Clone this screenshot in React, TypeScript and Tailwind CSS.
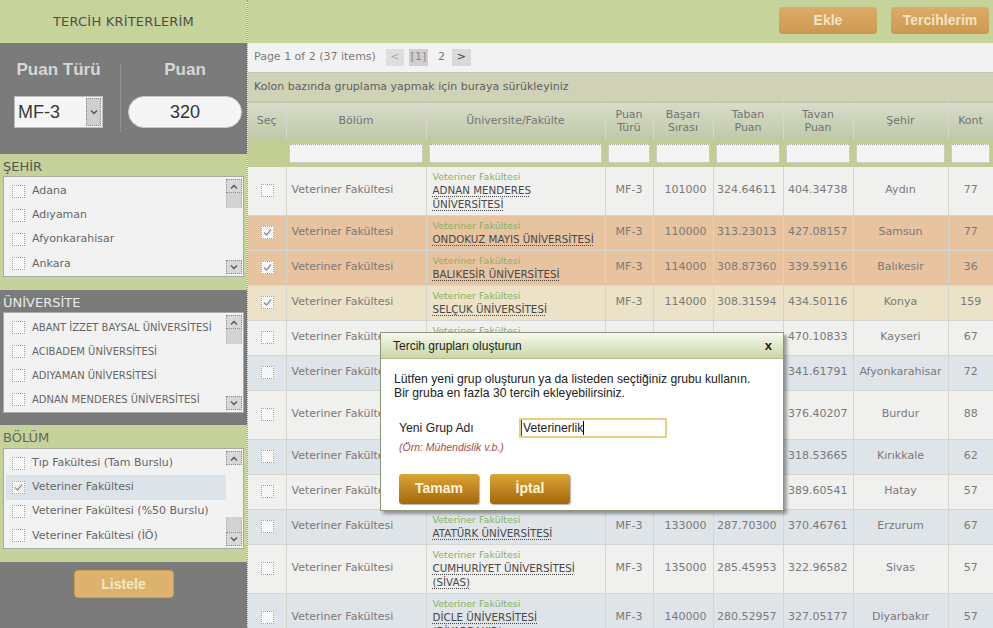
import React from 'react';

type Row = {
  sel?: boolean;
  uni: string[];
  sira: string;
  taban: string;
  tavan: string;
  sehir: string;
  kont: string;
  tone: 'white' | 'blue' | 'orange' | 'beige';
};

const tones = {
  white: 'bg-[#f0f0ef]',
  blue: 'bg-[#dfe4e9]',
  orange: 'bg-[#e7c3a0]',
  beige: 'bg-[#ebe2c7]',
};

const rows: Row[] = [
  { uni: ['ADNAN MENDERES', 'ÜNİVERSİTESİ'], sira: '101000', taban: '324.64611', tavan: '404.34738', sehir: 'Aydın', kont: '77', tone: 'white' },
  { sel: true, uni: ['ONDOKUZ MAYIS ÜNİVERSİTESİ'], sira: '110000', taban: '313.23013', tavan: '427.08157', sehir: 'Samsun', kont: '77', tone: 'orange' },
  { sel: true, uni: ['BALIKESİR ÜNİVERSİTESİ'], sira: '114000', taban: '308.87360', tavan: '339.59116', sehir: 'Balıkesir', kont: '36', tone: 'orange' },
  { sel: true, uni: ['SELÇUK ÜNİVERSİTESİ'], sira: '114000', taban: '308.31594', tavan: '434.50116', sehir: 'Konya', kont: '159', tone: 'beige' },
  { uni: ['ERCİYES ÜNİVERSİTESİ'], sira: '116000', taban: '305.88190', tavan: '470.10833', sehir: 'Kayseri', kont: '67', tone: 'white' },
  { uni: ['AFYON KOCATEPE ÜNİVERSİTESİ'], sira: '120000', taban: '300.14552', tavan: '341.61791', sehir: 'Afyonkarahisar', kont: '72', tone: 'blue' },
  { uni: ['MEHMET AKİF ERSOY', 'ÜNİVERSİTESİ'], sira: '124000', taban: '296.40318', tavan: '376.40207', sehir: 'Burdur', kont: '88', tone: 'white' },
  { uni: ['KIRIKKALE ÜNİVERSİTESİ'], sira: '128000', taban: '292.60114', tavan: '318.53665', sehir: 'Kırıkkale', kont: '62', tone: 'blue' },
  { uni: ['MUSTAFA KEMAL ÜNİVERSİTESİ'], sira: '131000', taban: '289.90412', tavan: '389.60541', sehir: 'Hatay', kont: '57', tone: 'white' },
  { uni: ['ATATÜRK ÜNİVERSİTESİ'], sira: '133000', taban: '287.70300', tavan: '370.46761', sehir: 'Erzurum', kont: '67', tone: 'blue' },
  { uni: ['CUMHURİYET ÜNİVERSİTESİ', '(SİVAS)'], sira: '135000', taban: '285.45953', tavan: '322.96582', sehir: 'Sivas', kont: '57', tone: 'white' },
  { uni: ['DİCLE ÜNİVERSİTESİ', '(DİYARBAKIR)'], sira: '140000', taban: '280.52957', tavan: '327.05177', sehir: 'Diyarbakır', kont: '57', tone: 'blue' },
];

const cities = ['Adana', 'Adıyaman', 'Afyonkarahisar', 'Ankara'];
const unis = ['ABANT İZZET BAYSAL ÜNİVERSİTESİ', 'ACIBADEM ÜNİVERSİTESİ', 'ADIYAMAN ÜNİVERSİTESİ', 'ADNAN MENDERES ÜNİVERSİTESİ'];
const bolumler = ['Tıp Fakültesi (Tam Burslu)', 'Veteriner Fakültesi', 'Veteriner Fakültesi (%50 Burslu)', 'Veteriner Fakültesi (İÖ)'];

function Chevron({ up }: { up?: boolean }) {
  return (
    <svg width="8" height="5" viewBox="0 0 8 5">
      <path d={up ? 'M1 4.5L4 1.5L7 4.5' : 'M1 0.5L4 3.5L7 0.5'} fill="none" stroke="#555" strokeWidth="1.3" />
    </svg>
  );
}

function Box({ checked }: { checked?: boolean }) {
  return (
    <span className="w-[13px] h-[13px] shrink-0 border border-dotted border-[#a4a4a4] bg-[#f7f7f7] flex items-center justify-center">
      {checked && (
        <svg width="11" height="11" viewBox="0 0 11 11">
          <path d="M2 5.5L4.5 8L9 2.5" fill="none" stroke="#8e8e8e" strokeWidth="1.2" />
        </svg>
      )}
    </span>
  );
}

function ListBox({ items, selected, upper, thumbBottom }: { items: string[]; selected?: number; upper?: boolean; thumbBottom?: boolean }) {
  return (
    <div className="mx-[3px] h-[101px] bg-[#f2f2f2] border border-[#a9a9a9] flex">
      <div className="flex-1 flex flex-col pt-[2px] pl-[2px]">
        {items.map((it, i) => (
          <div key={it} className={`h-[24.5px] flex items-center pl-[6px] gap-[7px] ${selected === i ? 'bg-[#dde4e9]' : ''}`}>
            <Box checked={selected === i} />
            <span className={`${upper ? 'text-[10px]' : 'text-[11px]'} text-[#666] whitespace-nowrap`}>{it}</span>
          </div>
        ))}
      </div>
      <div className="w-[16px] mr-[1px] py-[2px] flex flex-col">
        <div className="h-[14px] bg-[#d8d8d8] border border-dotted border-[#8f8f8f] flex items-center justify-center">
          <Chevron up />
        </div>
        <div className={`flex-1 flex flex-col ${thumbBottom ? 'justify-end' : 'justify-start'}`}>
          <div className="h-[15px] bg-[#d2d2d2] border-x border-[#c4c4c4]" />
        </div>
        <div className="h-[14px] bg-[#d8d8d8] border border-dotted border-[#8f8f8f] flex items-center justify-center">
          <Chevron />
        </div>
      </div>
    </div>
  );
}

function Sidebar() {
  return (
    <aside className="w-[247px] shrink-0 flex flex-col">
      <div className="h-[43px] bg-[#c6d39b] flex items-center justify-center text-[13px] text-[#4e4e4e] tracking-[0.2px]">
        TERCİH KRİTERLERİM
      </div>
      <div className="h-[111px] bg-[#7b7b7b] flex font-['Liberation_Sans',sans-serif]">
        <div className="w-[120px] pl-[14px] pt-[17px]">
          <div className="w-[89px] flex flex-col items-center">
            <div className="text-[17px] font-bold text-[#d6d6d6] leading-[20px] whitespace-nowrap">Puan Türü</div>
            <div className="mt-[16px] w-[89px] h-[32px] bg-[#f5f5f5] border border-[#bdbdbd] flex items-center">
              <span className="flex-1 pl-[3px] text-[18px] text-[#3a3a3a]">MF-3</span>
              <span className="w-[15px] h-[28px] mr-[1px] bg-[#cfcfcf] border border-dotted border-[#8a8a8a] flex items-center justify-center">
                <Chevron />
              </span>
            </div>
          </div>
        </div>
        <div className="my-[22px] border-l border-dotted border-[#a8a8a8]" />
        <div className="flex-1 pl-[7px] pr-[5px] pt-[17px] flex flex-col items-center">
          <div className="text-[17px] font-bold text-[#d6d6d6] leading-[20px]">Puan</div>
          <div className="mt-[16px] w-full h-[32px] bg-[#f5f5f5] rounded-full border border-[#c8c8c8] flex items-center justify-center text-[18px] text-[#333]">
            320
          </div>
        </div>
      </div>
      <div className="h-[136px] bg-[#c5d299] pt-[4px]">
        <div className="px-[3px] h-[18px] text-[13px] leading-[18px] text-[#555]">ŞEHİR</div>
        <ListBox items={cities} />
      </div>
      <div className="h-[135px] bg-[#7b7b7b] pt-[4px]">
        <div className="px-[3px] h-[18px] text-[13px] leading-[18px] text-[#ececec]">ÜNİVERSİTE</div>
        <ListBox items={unis} upper />
      </div>
      <div className="h-[137px] bg-[#c5d299] pt-[4px]">
        <div className="px-[3px] h-[19px] text-[13px] leading-[18px] text-[#666]">BÖLÜM</div>
        <ListBox items={bolumler} selected={1} thumbBottom />
      </div>
      <div className="flex-1 bg-[#7b7b7b] pt-[8px] flex justify-center">
        <div className="w-[100px] h-[28px] rounded-[4px] bg-[#ddb26c] border border-[#c99a52] flex items-center justify-center font-['Liberation_Sans',sans-serif] text-[14px] font-bold text-[#f4e6c8]">
          Listele
        </div>
      </div>
    </aside>
  );
}

const heads = [
  { t: ['Seç'], w: 'w-[38px]' },
  { t: ['Bölüm'], w: 'w-[140px]' },
  { t: ['Üniversite/Fakülte'], w: 'w-[179px]' },
  { t: ['Puan', 'Türü'], w: 'w-[48px]' },
  { t: ['Başarı', 'Sırası'], w: 'w-[60px]' },
  { t: ['Taban', 'Puan'], w: 'w-[70px]' },
  { t: ['Tavan', 'Puan'], w: 'w-[70px]' },
  { t: ['Şehir'], w: 'w-[95px]' },
  { t: ['Kont'], w: 'w-[45px]' },
];

function Grid() {
  const cell = 'border-r border-[#d5d6cd]';
  return (
    <table className="w-[745px] table-fixed border-collapse text-[11px] text-[#7a7a7a]">
      <colgroup>
        {heads.map((h) => (
          <col key={h.t.join()} className={h.w} />
        ))}
      </colgroup>
      <thead>
        <tr className="h-[38px] bg-gradient-to-b from-[#d8dcc9] to-[#c0c9a9] border-y border-[#c2c7b2]">
          {heads.map((h) => (
            <th key={h.t.join()} className={`${cell} font-normal text-center leading-[13px] text-[#747474]`}>
              {h.t.map((l) => (
                <div key={l}>{l}</div>
              ))}
            </th>
          ))}
        </tr>
        <tr className="h-[27px] bg-[#c1cd93]">
          <th />
          {heads.slice(1).map((h) => (
            <th key={h.t.join()} className="px-[3px]">
              <div className="h-[19px] bg-[#f4f4f4] rounded-[2px] border border-dotted border-[#a2a89a]" />
            </th>
          ))}
        </tr>
      </thead>
      <tbody>
        {rows.map((r, i) => (
          <tr key={i} className={`${tones[r.tone]} border-b border-[#d6d6d6]`}>
            <td className={cell}>
              <div className="flex justify-center pl-[2px]">
                <Box checked={r.sel} />
              </div>
            </td>
            <td className={`${cell} pl-[5px] whitespace-nowrap`}>Veteriner Fakültesi</td>
            <td className={`${cell} pl-[6px] pr-[4px] py-[4px]`}>
              <div className="text-[9.5px] leading-[12px] text-[#86b266]">Veteriner Fakültesi</div>
              {r.uni.map((l) => (
                <div key={l} className="text-[10.3px] leading-[14px] text-[#484848] whitespace-nowrap">
                  <span className="underline decoration-dotted underline-offset-2">{l}</span>
                </div>
              ))}
            </td>
            <td className={`${cell} text-center`}>MF-3</td>
            <td className={`${cell} text-right pr-[6px]`}>{r.sira}</td>
            <td className={`${cell} text-right pr-[6px]`}>{r.taban}</td>
            <td className={`${cell} text-right pr-[5px]`}>{r.tavan}</td>
            <td className={`${cell} text-center`}>{r.sehir}</td>
            <td className="text-center">{r.kont}</td>
          </tr>
        ))}
      </tbody>
    </table>
  );
}

function Dialog() {
  return (
    <div className="absolute left-[380px] top-[332px] w-[404px] h-[179px] bg-white border border-[#8d957a] shadow-[3px_3px_3px_rgba(0,0,0,0.35)] font-['Liberation_Sans',sans-serif] text-[#222]">
      <div className="h-[26px] bg-gradient-to-b from-[#f7f9ee] to-[#cbd7a5] border-b border-[#b3bd90] flex items-center justify-between pl-[12px] pr-[11px]">
        <span className="text-[12px]">Tercih grupları oluşturun</span>
        <span className="text-[13px] font-bold leading-none">x</span>
      </div>
      <div className="pl-[13px] pt-[14px]">
        <p className="text-[12.2px] leading-[13.5px]">
          Lütfen yeni grup oluşturun ya da listeden seçtiğiniz grubu kullanın.
          <br />
          Bir gruba en fazla 30 tercih ekleyebilirsiniz.
        </p>
        <div className="pl-[5px] mt-[18px] flex items-center">
          <span className="w-[120px] text-[12.2px]">Yeni Grup Adı</span>
          <div className="w-[148px] h-[20px] border-2 border-[#e7cf80] shadow-[inset_1px_0_0_#444] flex items-center pl-[2px] text-[12.2px]">
            Veterinerlik
            <span className="w-px h-[14px] bg-black" />
          </div>
        </div>
        <div className="pl-[5px] mt-[2px] text-[10.5px] italic text-[#a24c4c]">(Örn: Mühendislik v.b.)</div>
        <div className="pl-[5px] mt-[18px] flex gap-[11px]">
          {['Tamam', 'İptal'].map((b) => (
            <div key={b} className="w-[80px] h-[30px] rounded-[3px] bg-gradient-to-b from-[#dba535] to-[#a56808] shadow-[1px_1px_1px_rgba(0,0,0,0.3)] flex items-center justify-center text-[14px] font-bold text-[#fff3da]">
              {b}
            </div>
          ))}
        </div>
      </div>
    </div>
  );
}

export default function App() {
  return (
    <div className="w-[993px] h-[628px] overflow-hidden relative flex bg-[#f0f0ef] font-['DejaVu_Sans',sans-serif]">
      <Sidebar />
      <main className="flex-1 flex flex-col border-l border-dotted border-[#9a9a9a] overflow-hidden">
        <div className="h-[43px] shrink-0 bg-[#c6d39b] flex justify-end gap-[14px] pt-[7px] pr-[4px]">
          {['Ekle', 'Tercihlerim'].map((b) => (
            <div key={b} className="w-[98px] h-[27px] rounded-[4px] bg-gradient-to-b from-[#dcac68] to-[#cc984f] flex items-center justify-center font-['Liberation_Sans',sans-serif] text-[14px] font-bold text-[#f3e4c4]">
              {b}
            </div>
          ))}
        </div>
        <div className="h-[29px] shrink-0 bg-[#f2f2f2] flex items-center pl-[6px] text-[11px] text-[#7a7a7a]">
          <span>Page 1 of 2 (37 items)</span>
          <span className="ml-[10px] w-[18px] h-[17px] bg-[#dedede] flex items-center justify-center text-[#aaa]">&lt;</span>
          <span className="ml-[5px] w-[19px] h-[17px] bg-[#cfcfcf] flex items-center justify-center text-[#8a8a8a]">[1]</span>
          <span className="ml-[10px]">2</span>
          <span className="ml-[7px] w-[19px] h-[17px] bg-[#d9d9d9] flex items-center justify-center text-[#444]">&gt;</span>
        </div>
        <div className="h-[29px] shrink-0 bg-[#cfd2b7] border-t border-[#c6c9ae] flex items-center pl-[6px] text-[11px] text-[#5e5e5e]">
          Kolon bazında gruplama yapmak için buraya sürükleyiniz
        </div>
        <Grid />
      </main>
      <Dialog />
    </div>
  );
}
